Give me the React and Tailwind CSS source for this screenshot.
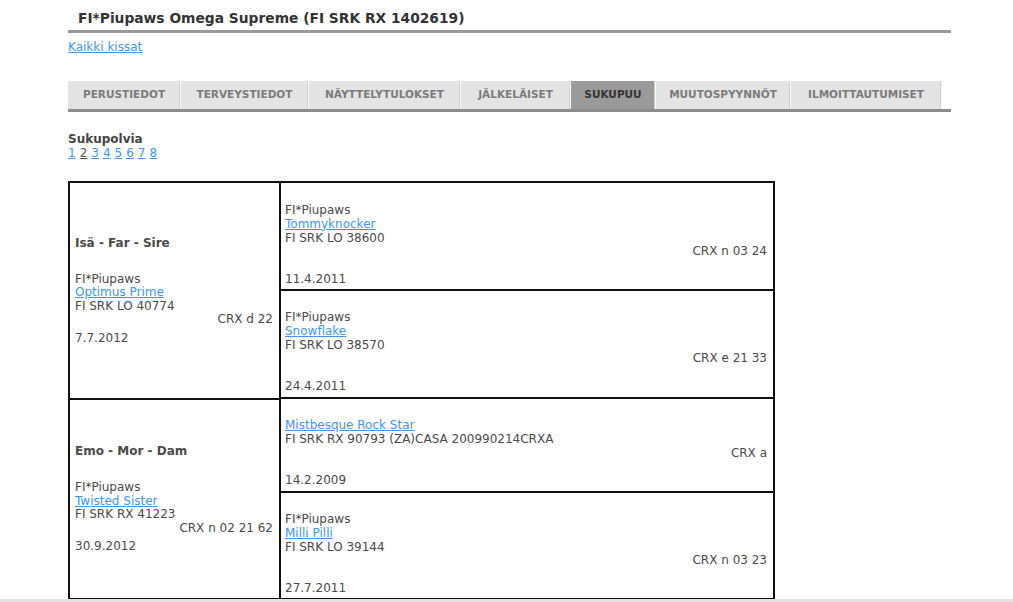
import React from "react";

const tabs = [
  { label: "PERUSTIEDOT", w: "w-[113px]" },
  { label: "TERVEYSTIEDOT", w: "w-[128px]" },
  { label: "NÄYTTELYTULOKSET", w: "w-[152px]" },
  { label: "JÄLKELÄISET", w: "w-[110px]" },
  { label: "SUKUPUU", w: "w-[85px]", active: true },
  { label: "MUUTOSPYYNNÖT", w: "w-[135px]" },
  { label: "ILMOITTAUTUMISET", w: "w-[151px]" },
];

const Link = ({ children }) => (
  <a href="#" className="text-[#3d97f0] underline">{children}</a>
);

function Parent({ title, prefix, name, reg, crx, date }) {
  return (
    <div className="flex flex-col justify-center h-full pl-[5px] pr-[6px]">
      <div className="font-bold leading-[14px]">{title}</div>
      <div className="mt-[23px] leading-[13.6px]">
        <div>{prefix}</div>
        <div><Link>{name}</Link></div>
        <div>{reg}</div>
        <div className="text-right">{crx}</div>
        <div className="mt-[5px]">{date}</div>
      </div>
    </div>
  );
}

function GrandParent({ prefix, name, reg, crx, date, h, pt, last }) {
  return (
    <div className={`${h} ${pt} pl-[4px] pr-[6px] leading-[13.8px] ${last ? "" : "border-b-2 border-[#111]"}`}>
      {prefix && <div>{prefix}</div>}
      <div><Link>{name}</Link></div>
      <div>{reg}</div>
      <div className="text-right">{crx}</div>
      <div>&nbsp;</div>
      <div>{date}</div>
    </div>
  );
}

export default function App() {
  return (
    <div className="min-h-[602px] bg-white font-['DejaVu_Sans',Verdana,sans-serif] text-[12px] text-[#4a4a4a]">
      <div className="ml-[68px] w-[883px]">
        <div className="pt-[8px] pb-[2px] pl-[10px] border-b-[3px] border-[#999] text-[13.8px] leading-[20px] font-bold text-[#333]">
          FI*Piupaws Omega Supreme (FI SRK RX 1402619)
        </div>

        <div className="mt-[6px] leading-[16px] text-[12px]">
          <Link>Kaikki kissat</Link>
        </div>

        <div className="mt-[26px] flex border-b-[3px] border-[#8c8c8c]">
          {tabs.map((t) => (
            <div
              key={t.label}
              className={`${t.w} h-[28px] flex items-center justify-center border-r border-[#f8f8f8] shadow-[inset_-1px_0_0_#cfcfcf] text-[10.5px] font-bold ${
                t.active ? "bg-[#9a9a9a] text-[#333]" : "bg-[#e4e4e4] text-[#7b7b7b]"
              }`}
            >
              {t.label}
            </div>
          ))}
        </div>

        <div className="mt-[20px] leading-[14px]">
          <div className="font-bold text-[#444]">Sukupolvia</div>
          <div className="flex gap-[4px]">
            <Link>1</Link>
            <span className="underline text-[#555]">2</span>
            <Link>3</Link>
            <Link>4</Link>
            <Link>5</Link>
            <Link>6</Link>
            <Link>7</Link>
            <Link>8</Link>
          </div>
        </div>

        <div className="mt-[21px] w-[707px] h-[419px] flex border-2 border-[#111]">
          <div className="w-[209px] flex flex-col">
            <div className="h-[217px] border-b-2 border-[#111]">
              <Parent
                title="Isä - Far - Sire"
                prefix="FI*Piupaws"
                name="Optimus Prime"
                reg="FI SRK LO 40774"
                crx="CRX d 22"
                date="7.7.2012"
              />
            </div>
            <div className="flex-1">
              <Parent
                title="Emo - Mor - Dam"
                prefix="FI*Piupaws"
                name="Twisted Sister"
                reg="FI SRK RX 41223"
                crx="CRX n 02 21 62"
                date="30.9.2012"
              />
            </div>
          </div>
          <div className="flex-1 flex flex-col border-l-2 border-[#111]">
            <GrandParent
              h="h-[108px]"
              pt="pt-[21px]"
              prefix="FI*Piupaws"
              name="Tommyknocker"
              reg="FI SRK LO 38600"
              crx="CRX n 03 24"
              date="11.4.2011"
            />
            <GrandParent
              h="h-[108px]"
              pt="pt-[20px]"
              prefix="FI*Piupaws"
              name="Snowflake"
              reg="FI SRK LO 38570"
              crx="CRX e 21 33"
              date="24.4.2011"
            />
            <GrandParent
              h="h-[94px]"
              pt="pt-[20px]"
              name="Mistbesque Rock Star"
              reg="FI SRK RX 90793 (ZA)CASA 200990214CRXA"
              crx="CRX a"
              date="14.2.2009"
            />
            <GrandParent
              h="flex-1"
              pt="pt-[20px]"
              last
              prefix="FI*Piupaws"
              name="Milli Pilli"
              reg="FI SRK LO 39144"
              crx="CRX n 03 23"
              date="27.7.2011"
            />
          </div>
        </div>
      </div>
      <div className="fixed bottom-0 left-0 w-full h-[3px] bg-[#e2e2e2]" />
    </div>
  );
}
